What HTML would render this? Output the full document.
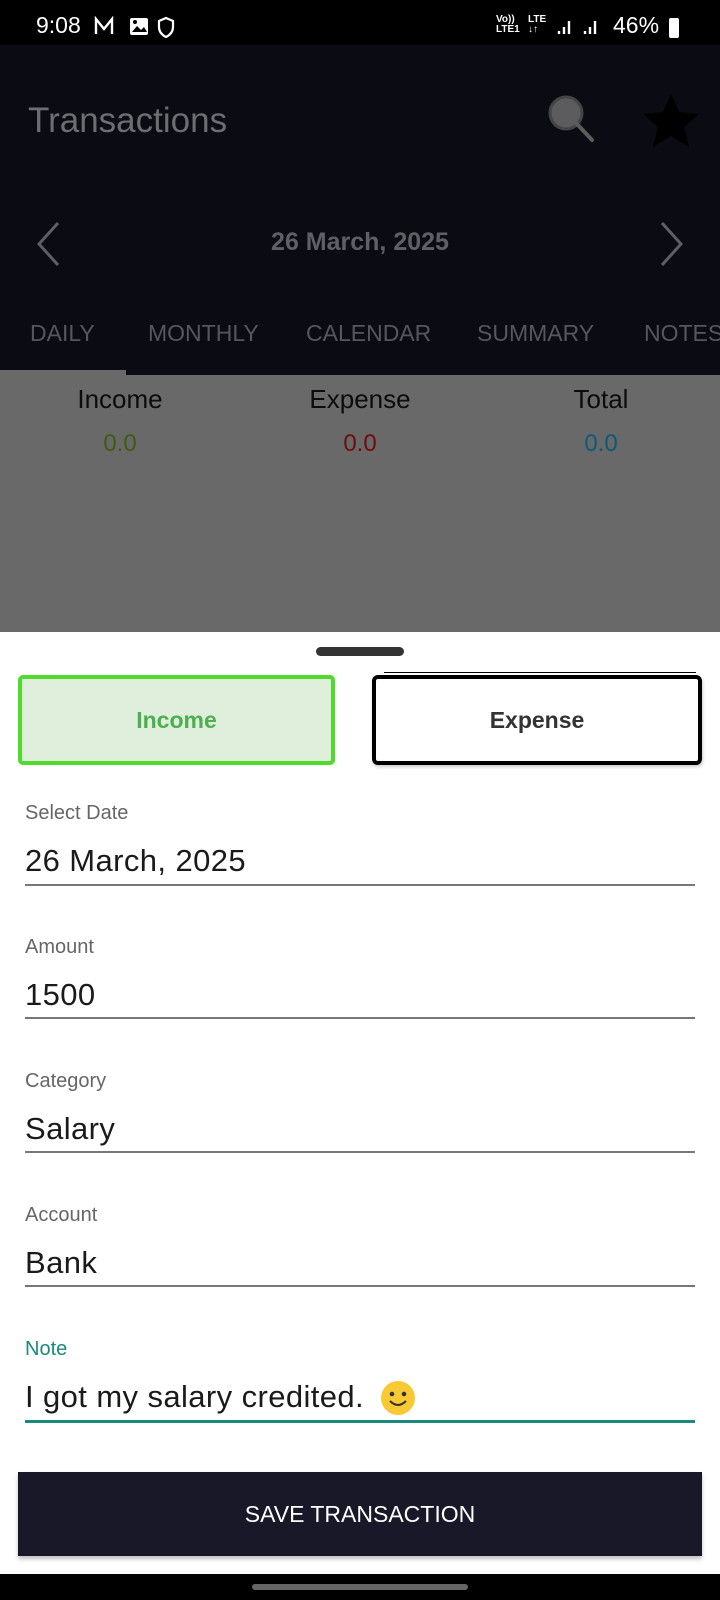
<!DOCTYPE html>
<html><head><meta charset="utf-8"><style>
*{margin:0;padding:0;box-sizing:border-box}
body{width:720px;height:1600px;overflow:hidden;font-family:"Liberation Sans",sans-serif;background:#fff;position:relative}
.a{position:absolute}
.lbl{position:absolute;left:25px;font-size:20px;color:#666}
.val{position:absolute;left:25px;font-size:31px;color:#1a1a1a;letter-spacing:0.4px}
.ln{position:absolute;left:25px;width:670px;height:2px;background:#777}
</style></head><body>
<div class="a" style="left:0;top:0;width:720px;height:45px;background:#000"></div>
<div class="a" style="left:36px;top:12px;color:#fff;font-size:23px">9:08</div>
<svg class="a" style="left:94px;top:16px" width="90" height="22" viewBox="0 0 90 22"><path d="M2 18V3l8 10 8-10v15" fill="none" stroke="#fff" stroke-width="2.4"/><rect x="36" y="2" width="18" height="17" rx="2" fill="#fff"/><path d="M38 16l5-6 4 4 3-3 3 5z" fill="#000"/><circle cx="41" cy="6" r="2" fill="#000"/><path d="M72 2l7 3v6c0 5-3 8-7 10-4-2-7-5-7-10V5z" fill="none" stroke="#fff" stroke-width="2.2"/></svg>
<div class="a" style="left:496px;top:15px;color:#fff;font-size:10px;line-height:10px;font-weight:bold">Vo))<br>LTE1</div>
<div class="a" style="left:528px;top:15px;color:#fff;font-size:10px;line-height:10px;font-weight:bold">LTE<br>↓↑</div>
<svg class="a" style="left:556px;top:16px" width="50" height="20"><path d="M3 18v-3M8 18v-7M13 18V5M29 18v-3M34 18v-7M39 18V5" stroke="#fff" stroke-width="2.4"/></svg>
<div class="a" style="left:613px;top:12px;color:#fff;font-size:23px">46%</div>
<div class="a" style="left:669px;top:18px;width:10px;height:20px;background:#fff;border-radius:2px"></div>

<div class="a" style="left:0;top:45px;width:720px;height:330px;background:#0b0c13"></div>
<div class="a" style="left:28px;top:101px;color:#6d6e72;font-size:35px">Transactions</div>
<svg class="a" style="left:545px;top:92px" width="60" height="60"><circle cx="21" cy="21" r="16" fill="#5c5c5e" stroke="#444" stroke-width="3"/><path d="M32 32l15 16" stroke="#5c5c5e" stroke-width="4" stroke-linecap="round"/></svg>
<svg class="a" style="left:640px;top:92px" width="62" height="58"><path d="M31 2l8 18 20 2-15 13 5 20-18-11-18 11 5-20L3 22l20-2z" fill="#000"/></svg>
<svg class="a" style="left:30px;top:220px" width="40" height="48"><path d="M28 3L9 24l19 21" fill="none" stroke="#5e5f63" stroke-width="3"/></svg>
<svg class="a" style="left:652px;top:220px" width="40" height="48"><path d="M10 3l19 21-19 21" fill="none" stroke="#5e5f63" stroke-width="3"/></svg>
<div class="a" style="left:0;width:720px;top:228px;text-align:center;color:#5f6066;font-size:25px;font-weight:bold">26 March, 2025</div>
<div class="a" style="top:320px;left:30px;color:#55575e;font-size:23px;white-space:nowrap">DAILY</div>
<div class="a" style="top:320px;left:148px;color:#55575e;font-size:23px">MONTHLY</div>
<div class="a" style="top:320px;left:306px;color:#55575e;font-size:23px">CALENDAR</div>
<div class="a" style="top:320px;left:477px;color:#55575e;font-size:23px">SUMMARY</div>
<div class="a" style="top:320px;left:644px;color:#55575e;font-size:23px;white-space:nowrap">NOTES</div>
<div class="a" style="left:0;top:370px;width:126px;height:5px;background:#6a6a6a"></div>
<div class="a" style="left:0;top:375px;width:720px;height:257px;background:#696969"></div>
<div class="a" style="left:20px;width:200px;top:384px;text-align:center;font-size:26px;color:#0c0c0c">Income</div>
<div class="a" style="left:260px;width:200px;top:384px;text-align:center;font-size:26px;color:#0c0c0c">Expense</div>
<div class="a" style="left:501px;width:200px;top:384px;text-align:center;font-size:26px;color:#0c0c0c">Total</div>
<div class="a" style="left:20px;width:200px;top:430px;text-align:center;font-size:24px;color:#3e5d10">0.0</div>
<div class="a" style="left:260px;width:200px;top:430px;text-align:center;font-size:24px;color:#6e0c10">0.0</div>
<div class="a" style="left:501px;width:200px;top:430px;text-align:center;font-size:24px;color:#0f5a78">0.0</div>

<div class="a" style="left:316px;top:647px;width:88px;height:9px;border-radius:5px;background:#333"></div>
<div class="a" style="left:18px;top:675px;width:317px;height:90px;border:4px solid #4fdb2a;border-radius:5px;background:#dfefdc;text-align:center;line-height:82px;font-size:23px;font-weight:bold;color:#4caf50">Income</div>
<div class="a" style="left:384px;top:672px;width:312px;height:4px;border-top:1px solid #000;border-bottom:1px solid #000"></div>
<div class="a" style="left:372px;top:675px;width:330px;height:90px;border:4px solid #000;border-radius:6px;background:#fff;text-align:center;line-height:82px;font-size:23px;font-weight:bold;color:#333;box-shadow:1px 2px 3px rgba(0,0,0,.2)">Expense</div>

<div class="lbl" style="top:802px">Select Date</div>
<div class="val" style="top:843px">26 March, 2025</div>
<div class="ln" style="top:884px"></div>
<div class="lbl" style="top:936px">Amount</div>
<div class="val" style="top:977px">1500</div>
<div class="ln" style="top:1017px"></div>
<div class="lbl" style="top:1070px">Category</div>
<div class="val" style="top:1111px">Salary</div>
<div class="ln" style="top:1151px"></div>
<div class="lbl" style="top:1204px">Account</div>
<div class="val" style="top:1245px">Bank</div>
<div class="ln" style="top:1285px"></div>
<div class="lbl" style="top:1338px;color:#1a8a7e">Note</div>
<div class="val" style="top:1379px">I got my salary credited.</div>
<svg class="a" style="left:380px;top:1380px" width="36" height="36"><circle cx="18" cy="18" r="17" fill="#f7c934"/><circle cx="12" cy="14" r="2.3" fill="#333"/><circle cx="24" cy="14" r="2.3" fill="#333"/><path d="M10 21q8 8 16 0" fill="none" stroke="#333" stroke-width="2"/></svg>
<div class="ln" style="top:1420px;height:3px;background:#1a8a7e"></div>

<div class="a" style="left:18px;top:1472px;width:684px;height:84px;background:#181828;color:#fff;text-align:center;line-height:84px;font-size:23px;box-shadow:0 3px 4px rgba(0,0,0,.25)">SAVE TRANSACTION</div>
<div class="a" style="left:0;top:1574px;width:720px;height:26px;background:#000"></div>
<div class="a" style="left:252px;top:1584px;width:216px;height:6px;border-radius:3px;background:#666"></div>
</body></html>
